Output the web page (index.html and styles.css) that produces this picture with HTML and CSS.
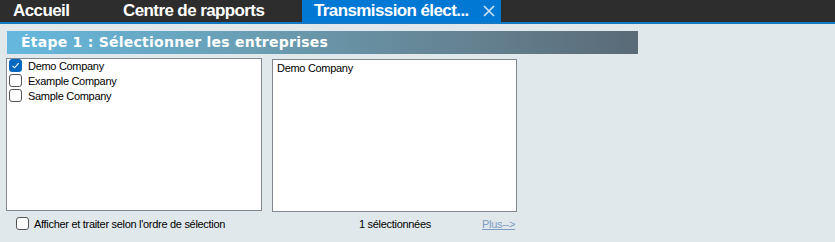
FILE: index.html
```html
<!DOCTYPE html>
<html>
<head>
    <link rel="stylesheet" href="styles.css">
</head>
<body>
    <div class="tabbar">
        <div class="tab tab-home">Accueil</div>
        <div class="tab tab-reports">Centre de rapports</div>
        <div class="tab active">Transmission élect...<svg class="close" width="12" height="12" viewBox="0 0 12 12"><path d="M1 1 L11 11 M11 1 L1 11" stroke="#cfe3f5" stroke-width="1.6"/></svg></div>
    </div>

    <div class="content">
        <div class="step">Étape 1 : Sélectionner les entreprises</div>

        <div class="lists">
            <div class="box box-left">
                <label class="item"><span class="check on"><svg width="9" height="9" viewBox="0 0 9 9"><path d="M1.5 4.8 L3.6 6.8 L7.6 2.2" fill="none" stroke="#fff" stroke-width="1.1"/></svg></span>Demo Company</label>
                <label class="item"><span class="check"></span>Example Company</label>
                <label class="item"><span class="check"></span>Sample Company</label>
            </div>
            <div class="box box-right">
                <div class="sel">Demo Company</div>
            </div>
        </div>

        <div class="footer">
            <label class="order"><span class="check"></span>Afficher et traiter selon l'ordre de sélection</label>
            <span class="count">1 sélectionnées</span>
            <a class="more" href="#">Plus--&gt;</a>
        </div>
    </div>
</body>
</html>
```

FILE: styles.css
```css
body {
    margin: 0;
    background: #e1e8eb;
    font-family: 'Liberation Sans', Arial, sans-serif;
    color: #000;
    width: 835px;
    height: 242px;
    overflow: hidden;
}

.tabbar {
    display: flex;
    height: 22px;
    background: #2d2d2d;
    border-bottom: 2px solid #1279c6;
}

.tab {
    display: flex;
    align-items: center;
    color: #fff;
    font-weight: bold;
    font-size: 17px;
    letter-spacing: -0.6px;
    white-space: nowrap;
}

.tab-home {
    padding-left: 13px;
    width: 96px;
}

.tab-reports {
    padding-left: 14px;
    width: 179px;
}

.active {
    background: #0078d4;
    padding-left: 12px;
    width: 187px;
}

.close {
    margin-left: 14px;
}

.content {
    padding: 7px 0 0 6px;
}

.step {
    margin-left: 1px;
    width: 617px;
    height: 23px;
    padding-left: 14px;
    background: linear-gradient(to right, #65b8de 0%, #6a9db2 40%, #64808f 75%, #5a6a77 100%);
    color: #fff;
    font-family: 'DejaVu Sans', Verdana, sans-serif;
    font-weight: bold;
    font-size: 14px;
    line-height: 23px;
    letter-spacing: 0.25px;
}

.lists {
    display: flex;
    gap: 10px;
    margin-top: 4px;
    align-items: flex-start;
}

.box {
    background: #fff;
    border: 1px solid #828790;
    height: 151px;
    font-size: 11px;
    letter-spacing: -0.3px;
}

.box-left {
    width: 254px;
    height: 151px;
}

.box-right {
    width: 243px;
    margin-top: 1px;
}

.item {
    display: flex;
    align-items: center;
    height: 15px;
    padding-left: 2px;
}

.item:first-child {
    margin-top: -1px;
}

.check {
    display: inline-flex;
    align-items: center;
    justify-content: center;
    width: 11px;
    height: 11px;
    border: 1px solid #555;
    border-radius: 3px;
    background: #fff;
    margin-right: 6px;
    flex: none;
}

.check.on {
    background: #0067c0;
    border-color: #0067c0;
}

.sel {
    padding: 2px 0 0 4px;
}

.footer {
    display: flex;
    align-items: center;
    height: 15px;
    margin-top: 4px;
    font-size: 11px;
    letter-spacing: -0.3px;
}

.order {
    display: flex;
    align-items: center;
    padding-left: 10px;
    width: 343px;
}

.order .check {
    margin-right: 5px;
}

.count {
    width: 123px;
}

.more {
    color: #7d9cc2;
    text-decoration: underline;
}
```
